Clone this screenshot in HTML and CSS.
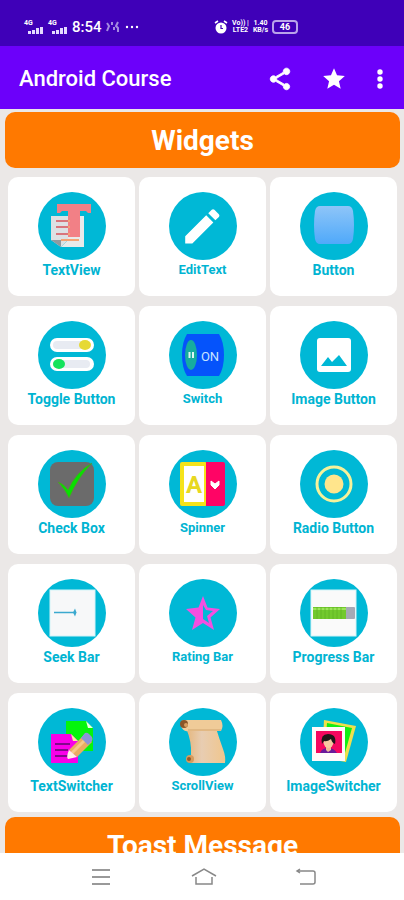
FILE: index.html
```
<!DOCTYPE html>
<html lang="en">
<head>
<meta charset="UTF-8" />
<meta name="viewport" content="width=device-width, initial-scale=1" />
<title>Android Course</title>
<link rel="stylesheet" href="styles.css">
</head>
<body>
  <div class="status">
    <div class="signal">
      <span>4G</span>
      <svg width="16" height="8" viewBox="0 0 16 8"><path d="M0 5h3v3H0zM4 4h3v4H4zM8 2h3v6H8zM12 1h3v7h-3z" fill="#e4daff"/></svg>
    </div>
    <div class="signal">
      <span>4G</span>
      <svg width="16" height="8" viewBox="0 0 16 8"><path d="M0 5h3v3H0zM4 4h3v4H4zM8 2h3v6H8zM12 1h3v7h-3z" fill="#e4daff"/></svg>
    </div>
    <span class="time">8:54</span>
    <svg class="buzz" width="14" height="12" viewBox="0 0 14 12" fill="none" stroke="#a58be0" stroke-width="2"><path d="M1 2l2 3-2 5M6 1v3M8 6v3M12 1l-2 4 2 2v4"/></svg>
    <svg class="more" width="16" height="12" viewBox="0 0 16 12" fill="#fff"><circle cx="3" cy="6" r="1.200"/><circle cx="8" cy="6" r="1.200"/><circle cx="13" cy="6" r="1.200"/></svg>
    <svg class="alarm" width="14" height="14" viewBox="0 0 14 14"><circle cx="7" cy="8" r="5.500" fill="#fff"/><path d="M1 3l3-2M13 3l-3-2" stroke="#fff" stroke-width="1.600"/><path d="M7 5v3.500h2" fill="none" stroke="#3f00b8" stroke-width="1.200"/></svg>
    <span class="net">Vo)) |<br>LTE2</span>
    <span class="net">1.40<br>KB/s</span>
    <span class="battery">46</span>
  </div>

  <header class="appbar">
    <h1>Android Course</h1>
    <button aria-label="Share"><svg width="26" height="26" viewBox="0 0 24 24" fill="#fff" stroke="#fff" stroke-width=".8"><path d="M18 16.080c-.76 0-1.440.3-1.960.77L8.910 12.700c.05-.23.09-.46.09-.7s-.04-.47-.09-.7l7.050-4.110c.54.5 1.250.81 2.040.81 1.660 0 3-1.340 3-3s-1.340-3-3-3-3 1.340-3 3c0 .24.04.47.09.7L8.040 9.810C7.500 9.310 6.790 9 6 9c-1.660 0-3 1.340-3 3s1.340 3 3 3c.79 0 1.500-.31 2.040-.81l7.120 4.160c-.05.21-.08.43-.08.65 0 1.610 1.310 2.920 2.920 2.920s2.920-1.310 2.920-2.920-1.310-2.920-2.920-2.920z"/></svg></button>
    <button aria-label="Favourite"><svg width="26" height="26" viewBox="0 0 24 24" fill="#fff"><path d="M12 17.270L18.180 21l-1.640-7.030L22 9.240l-7.190-.61L12 2 9.190 8.630 2 9.240l5.460 4.730L5.820 21z"/></svg></button>
    <button class="dots" aria-label="More options"><svg width="26" height="26" viewBox="0 0 24 24" fill="#fff"><circle cx="12" cy="5.500" r="2.500"/><circle cx="12" cy="12" r="2.500"/><circle cx="12" cy="18.500" r="2.500"/></svg></button>
  </header>

  <main>
    <h2>Widgets</h2>
    <div class="grid">
      <button class="card">
        <svg class="icon" viewBox="0 0 68 68">
          <path d="M30 24h16v31H23l7-7z" fill="#e9eaea"/>
          <path d="M19 12h34v9h-3l-2-2h-6v26H30V19h-6l-2 2h-3z" fill="#f28086"/>
          <path d="M13 24h17v24l-7 7-10-7z" fill="#dde1e4"/>
          <path d="M13 48h10v7z" fill="#8f9a9f"/>
          <path d="M18 29h12M18 35h12M18 42h12" stroke="#d9757c" stroke-width="2"/>
          <path d="M30 29h2M30 35h2M30 42h2M23 48h18" stroke="#f5a374" stroke-width="2"/>
        </svg>
        <span>TextView</span>
      </button>
      <button class="card mid">
        <svg class="icon" viewBox="0 0 68 68">
          <path transform="translate(10.500 11.500) scale(1.900)" d="M3 17.250V21h3.750L17.810 9.940l-3.750-3.750L3 17.250zM20.710 7.040c.39-.39.39-1.020 0-1.410l-2.340-2.340c-.39-.39-1.020-.39-1.410 0l-1.830 1.830 3.750 3.750 1.830-1.830z" fill="#fff"/>
        </svg>
        <span>EditText</span>
      </button>
      <button class="card">
        <svg class="icon" viewBox="0 0 68 68">
          <defs><linearGradient id="blue" x1="0" y1="0" x2="0" y2="1"><stop offset="0" stop-color="#8ec5f8"/><stop offset="1" stop-color="#4fa9fa"/></linearGradient></defs>
          <path d="M20 14h28q4 0 5 5 2 14 0 28-1 5-5 5H20q-4 0-5-5-2-14 0-28 1-5 5-5z" fill="url(#blue)"/>
        </svg>
        <span>Button</span>
      </button>

      <button class="card">
        <svg class="icon" viewBox="0 0 68 68">
          <rect x="12" y="17" width="44" height="14" rx="7" fill="#fff"/><rect x="15" y="20" width="37" height="8" rx="4" fill="#e8ebf2"/>
          <ellipse cx="47" cy="24" rx="6" ry="5" fill="#e6d936"/>
          <rect x="12" y="36" width="44" height="14" rx="7" fill="#fff"/><rect x="15" y="39" width="37" height="8" rx="4" fill="#e8ebf2"/>
          <ellipse cx="21" cy="43" rx="6" ry="5" fill="#14e35c"/>
        </svg>
        <span>Toggle Button</span>
      </button>
      <button class="card mid">
        <svg class="icon" viewBox="0 0 68 68">
          <path d="M18 13h32q5 8 5 21t-5 21H18q-5-8-5-21t5-21z" fill="#0553fb"/>
          <ellipse cx="22" cy="34" rx="6" ry="15" fill="#16ad9f"/>
          <path d="M20.500 31v6M24 31v6" stroke="#dff6f2" stroke-width="2"/>
          <text x="41" y="40" class="on">ON</text>
        </svg>
        <span>Switch</span>
      </button>
      <button class="card">
        <svg class="icon" viewBox="0 0 68 68">
          <rect x="17" y="17" width="34" height="34" rx="3" fill="#fff"/>
          <path d="M21 45l7-9 4 5 7-7 8 11z" fill="#00b8d6"/>
        </svg>
        <span>Image Button</span>
      </button>

      <button class="card">
        <svg class="icon" viewBox="0 0 68 68">
          <rect x="12" y="12" width="44" height="44" rx="8" fill="#6b6b6b"/>
          <path d="M20 32q6 2 10 8 8-18 24-27-14 14-23 35-4-9-11-16z" fill="#08e000" stroke="#5a9a20" stroke-width=".5"/>
        </svg>
        <span>Check Box</span>
      </button>
      <button class="card mid">
        <svg class="icon" viewBox="0 0 68 68">
          <rect x="11" y="12" width="27" height="44" rx="2" fill="#f5e31a"/>
          <rect x="15" y="16" width="20" height="36" fill="#fff"/>
          <text x="25" y="43" class="letter">A</text>
          <path d="M37 12h17q2 0 2 2v40q0 2-2 2H37z" fill="#ff0465"/>
          <path d="M42 31l4 3 4-3v4l-4 4-4-4z" fill="#fff" stroke="#fff"/>
        </svg>
        <span>Spinner</span>
      </button>
      <button class="card">
        <svg class="icon" viewBox="0 0 68 68">
          <circle cx="34" cy="34" r="17" fill="none" stroke="#f5f29a" stroke-width="3"/>
          <circle cx="34" cy="34" r="9.500" fill="#ffe58c"/>
        </svg>
        <span>Radio Button</span>
      </button>

      <button class="card">
        <svg class="icon" viewBox="0 0 68 68">
          <rect x="12" y="11" width="45" height="46" fill="#f7f8f9" stroke="#d2f3f8"/>
          <path d="M16 33.500h22" stroke="#3ba9cf" stroke-width="1.500"/>
          <path d="M35 33.500l2-4 1.500 4-1.500 4z" fill="#3ba9cf"/>
        </svg>
        <span>Seek Bar</span>
      </button>
      <button class="card mid">
        <svg class="icon" viewBox="0 0 68 68">
          <path fill-rule="evenodd" d="M34 17l4.500 11.500L51 30l-9.500 8.500L45 51l-11-7-11 7 3.500-12.500L17 30l12.500-1.500zM34 26v14l6 4-2-7 6-5-7-1z" fill="#f44fe0"/>
        </svg>
        <span>Rating Bar</span>
      </button>
      <button class="card">
        <svg class="icon" viewBox="0 0 68 68">
          <rect x="11" y="11" width="45" height="46" fill="#fafafa" stroke="#d2f3f8"/>
          <rect x="13" y="28" width="42" height="12" rx="1" fill="#a5a9b5"/>
          <rect x="13" y="28" width="33" height="12" fill="#72c92d"/>
          <path d="M13 30h33" stroke="#9be558" stroke-width="2"/>
          <path d="M17 28v12M21 28v12M25 28v12M29 28v12M33 28v12M37 28v12M41 28v12" stroke="#5fb524" stroke-width=".8"/>
        </svg>
        <span>Progress Bar</span>
      </button>

      <button class="card">
        <svg class="icon" viewBox="0 0 68 68">
          <path d="M28 13h20l7 7v23H28z" fill="#04f50c"/><path d="M48 13l7 7h-5z" fill="#e4ffe4"/>
          <path d="M13 26h20l7 7v22H13z" fill="#f800e8"/><path d="M33 26l7 7h-5z" fill="#ffe9a0"/>
          <path d="M17 36h15M17 42h13M17 48h13" stroke="#5a0b6b" stroke-width="1.500"/>
          <path d="M31 42l15-15 8 7-15 15z" fill="#e9ad62"/>
          <path d="M34 45l15-15" stroke="#f7c989" stroke-width="3"/>
          <path d="M43 30l4-5q2-1 4 1l3 3q1 2 0 4l-4 4z" fill="#8c94d8"/>
          <path d="M31 42l8 7-9 2q-2-2 1-9z" fill="#fff0e6"/>
        </svg>
        <span>TextSwitcher</span>
      </button>
      <button class="card mid">
        <svg class="icon" viewBox="0 0 68 68">
          <defs><linearGradient id="paper"><stop offset="0" stop-color="#e5b67c"/><stop offset=".4" stop-color="#e8cdb2"/><stop offset="1" stop-color="#f0c68d"/></linearGradient></defs>
          <path d="M17 20h30q3 10 7 21 3 8 2 14H22q-5-2 0-8 1-13-5-27z" fill="url(#paper)"/>
          <path d="M14 12h38q3 6 0 11H19q-5 1-7-5-1-5 2-6z" fill="#f0cb98"/>
          <path d="M19 22h33" stroke="#d3a56e" stroke-width="1"/>
          <circle cx="15" cy="16" r="4" fill="#8c5628"/><circle cx="17" cy="17" r="2" fill="#d99d5e"/>
          <circle cx="21" cy="51" r="4" fill="#d69c5d"/><circle cx="20" cy="51" r="2" fill="#915b2c"/>
        </svg>
        <span>ScrollView</span>
      </button>
      <button class="card">
        <svg class="icon" viewBox="0 0 68 68">
          <path d="M24 12l32 6-10 36-24-4z" fill="#f0e04c"/>
          <path d="M27 15l25 5-7 25-20-5z" fill="#12ef12"/>
          <rect x="12" y="19" width="33" height="34" fill="#fffafa"/>
          <rect x="16" y="23" width="26" height="22" fill="#f5085f"/>
          <path d="M20 45q2-5 8-5t9 5z" fill="#6b1899"/>
          <path d="M26 37h5v5l-3 2-2-2z" fill="#eebb94"/>
          <ellipse cx="28.500" cy="34" rx="5" ry="6" fill="#f7c8a1"/>
          <path d="M22 36q-2-10 6-10 9 0 7 10-3-1-4-5-4 3-7 2z" fill="#201718"/>
        </svg>
        <span>ImageSwitcher</span>
      </button>
    </div>
    <h2>Toast Message</h2>
  </main>

  <nav>
    <button aria-label="Recent apps"><svg width="28" height="20" viewBox="0 0 28 20" fill="none" stroke="#999" stroke-width="2"><path d="M5 3h18M5 10h18M5 17h18"/></svg></button>
    <button aria-label="Home"><svg width="28" height="20" viewBox="0 0 28 20" fill="none" stroke="#888" stroke-width="1.500"><path d="M2 9l12-7 12 7M6 10v7h16v-7"/></svg></button>
    <button aria-label="Back"><svg width="28" height="20" viewBox="0 0 28 20" fill="none" stroke="#888" stroke-width="1.500"><path d="M7 2L4 4l3 2M4 4h16q2 0 2 2v9q0 2-2 2H7"/></svg></button>
  </nav>
</body>
</html>
```
FILE: styles.css
```
* { box-sizing: border-box; }
body { margin: 0; height: 100vh; display: flex; flex-direction: column; font-family: Roboto, Arial, sans-serif; background: #ebe8e7; }
button { border: 0; padding: 0; background: none; font-family: inherit; cursor: pointer; }
svg { display: block; }

.status { flex: none; height: 46px; padding: 8px 24px 0; display: flex; align-items: center; gap: 4px; background: #3f00b8; color: #fff; }
.signal { display: flex; flex-direction: column; width: 20px; }
.signal span { font-size: 7px; line-height: 5px; font-weight: bold; }
.signal svg { align-self: flex-end; }
.time { font-size: 15px; font-weight: 500; }
.alarm { margin-left: auto; }
.net { font-size: 7px; line-height: 7px; font-weight: bold; text-align: center; }
.battery { width: 26px; height: 14px; margin-right: 82px; border: 2px solid #b9a3ea; border-radius: 4px; font-size: 9px; line-height: 10px; font-weight: bold; text-align: center; }

.appbar { flex: none; height: 63px; padding: 2px 11px 0 19px; display: flex; align-items: center; gap: 28px; background: #6c00fa; color: #fff; }
.appbar h1 { flex: 1; margin: 0; font-size: 22px; font-weight: 500; white-space: nowrap; }
.appbar .dots { margin-left: -8px; }

main { flex: 1; min-height: 0; padding-top: 3px; overflow-y: auto; scrollbar-width: none; }
h2 { margin: 0 4px 0 5px; height: 56px; border-radius: 10px; background: #ff7900; color: #fff; font-size: 28px; line-height: 58px; font-weight: bold; text-align: center; }
.grid { display: grid; grid-template-columns: repeat(3, 1fr); gap: 10px 4px; padding: 9px 7px 5px 8px; }
.card { height: 119px; padding-top: 15px; display: flex; flex-direction: column; align-items: center; justify-content: flex-start; border-radius: 10px; background: #fff; color: #00b4d2; font-size: 14px; line-height: 20px; font-weight: bold; white-space: nowrap; }
.mid { font-size: 13px; }
.icon { width: 68px; height: 68px; border-radius: 50%; background: #00b8d6; }
.on { font-size: 13px; fill: #c9e4ff; font-weight: normal; text-anchor: middle; }
.letter { font-size: 24px; fill: #e8d820; font-weight: bold; text-anchor: middle; }

nav { flex: none; height: 47px; padding: 0 46px 0 50px; display: flex; justify-content: space-around; align-items: center; background: #fff; }
```
